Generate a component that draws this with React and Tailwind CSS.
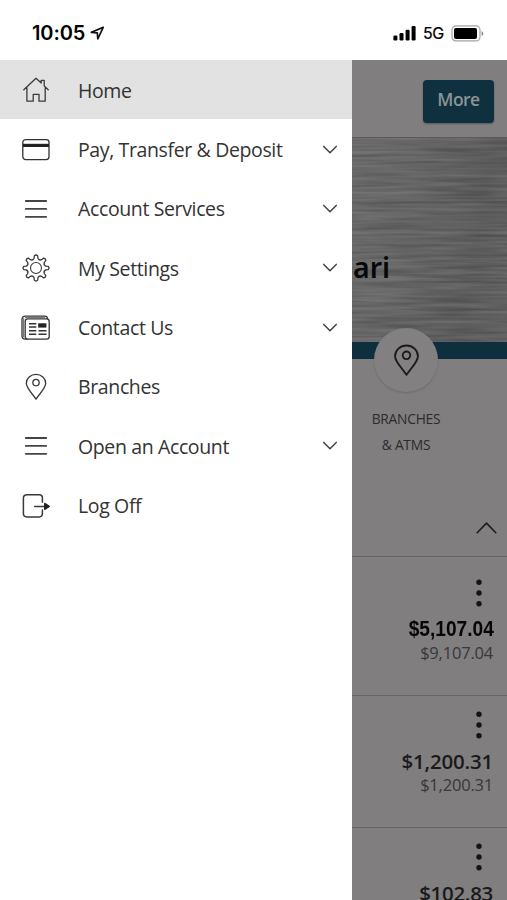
import React, { useState } from "react";

/* MENU ICONS */
const HomeIcon = () => (
  <svg width="28" height="28" viewBox="0 0 28 28" fill="none" stroke="#3a3a3a" strokeWidth="1.3" strokeLinejoin="round" strokeLinecap="round">
    <path d="M1.8 13.8 14 2.3l5.2 4.8V4.3h3v5.6l4 3.9M4.9 11.6v13.6h6.3v-6.9h5.8v6.9h6.2V11.6" />
  </svg>
);

const CardIcon = () => (
  <svg width="28" height="28" viewBox="0 0 28 28" fill="none" stroke="#333" strokeWidth="1.3">
    <rect x="0.8" y="3.6" width="26.2" height="20" rx="2.8" />
    <path d="M1 9.4h26" stroke="#222" strokeWidth="3.2" />
  </svg>
);

const LinesIcon = () => (
  <svg width="28" height="28" viewBox="0 0 28 28" fill="none" stroke="#444" strokeWidth="1.8" strokeLinecap="round">
    <path d="M3.8 6h20.4M3.8 13.9h20.4M3.8 21.8h20.4" />
  </svg>
);

const gearPath = () => {
  let d = "";
  for (let i = 0; i < 8; i++) {
    const pt = (r, deg) => {
      const a = ((i * 45 + deg - 90) * Math.PI) / 180;
      return `${(14 + r * Math.cos(a)).toFixed(2)} ${(14 + r * Math.sin(a)).toFixed(2)}`;
    };
    d += `${i === 0 ? "M" : "L"}${pt(10, -11)} L${pt(12.2, -8)} Q${pt(13.9, 0)} ${pt(12.2, 8)} L${pt(10, 11)} Q${pt(7.9, 22.5)} ${pt(10, 34)} `;
  }
  return d + "Z";
};

const GearIcon = () => (
  <svg width="28" height="28" viewBox="0 0 28 28" fill="none" stroke="#3a3a3a" strokeWidth="1.3" strokeLinejoin="round">
    <path d={gearPath()} />
    <circle cx="14" cy="14" r="5.5" strokeWidth="1.1" />
  </svg>
);

const NewsIcon = () => (
  <svg width="30" height="28" viewBox="0 0 30 28" fill="none" stroke="#333" strokeWidth="1.3" strokeLinejoin="round">
    <rect x="4.2" y="4.8" width="24" height="20.3" rx="2.6" />
    <path d="M6.5 25.1H4a3 3 0 0 1-3-3V5.2a3 3 0 0 1 3-3h19.6a3 3 0 0 1 3 2.7" />
    <path d="M2.6 4.2v19M4 3.5h20" stroke="#777" />
    <path d="M8 9.8h7.3M8 13.1h7.3M8 16.7h7.3M8 20.3h7.3M17.5 16.7h8M17.5 20.3h8" strokeWidth="1.5" />
    <path d="M17.2 9.3h8.2v4.3h-8.2z" fill="#222" stroke="none" />
  </svg>
);

const PinIcon = ({ size = 28, stroke = "#3a3a3a", width = 1.3 }) => (
  <svg width={size} height={size} viewBox="0 0 28 28" fill="none" stroke={stroke} strokeWidth={width} strokeLinejoin="round">
    <path d="M14 26.2C10.6 20.7 4.3 15.3 4.3 10.3a9.7 9 0 0 1 19.4 0c0 5-6.3 10.4-9.7 15.9Z" />
    <circle cx="14" cy="9.6" r="3.2" />
  </svg>
);

const LogOffIcon = () => (
  <svg width="28" height="28" viewBox="0 0 28 28" fill="none" stroke="#3a3a3a" strokeWidth="1.5" strokeLinecap="round">
    <path d="M20.4 10.2V6c0-2-1.4-3.3-3.3-3.3H4.8C2.7 2.7 1.4 4 1.4 6v15.6c0 2 1.4 3.3 3.4 3.3h12.3c2 0 3.3-1.3 3.3-3.3v-3.5" />
    <path d="M12.7 14.4h10" />
    <path d="M22.7 11.4v6l4.6-3z" fill="#222" stroke="#222" strokeWidth="1.3" strokeLinejoin="round" />
  </svg>
);

const menuItems = [
  { label: "Home", icon: <HomeIcon /> },
  { label: "Pay, Transfer & Deposit", icon: <CardIcon />, expandable: true },
  { label: "Account Services", icon: <LinesIcon />, expandable: true },
  { label: "My Settings", icon: <GearIcon />, expandable: true },
  { label: "Contact Us", icon: <NewsIcon />, expandable: true },
  { label: "Branches", icon: <PinIcon /> },
  { label: "Open an Account", icon: <LinesIcon />, expandable: true },
  { label: "Log Off", icon: <LogOffIcon /> },
];

const MoreDots = () => (
  <svg width="6" height="28" viewBox="0 0 6 28" fill="#141414" className="mr-[11.5px]">
    <circle cx="3" cy="3.2" r="2.7" />
    <circle cx="3" cy="14" r="2.7" />
    <circle cx="3" cy="24.8" r="2.7" />
  </svg>
);

/* brushed metal grain */
const Brushed = () => (
  <svg className="absolute inset-0 w-full h-full opacity-40" aria-hidden="true">
    <filter id="brushed" x="0" y="0" width="100%" height="100%" colorInterpolationFilters="sRGB">
      <feTurbulence type="fractalNoise" baseFrequency="0.014 0.3" numOctaves="2" seed="8" />
      <feColorMatrix values="0.42 0 0 0 0.18  0.42 0 0 0 0.178  0.42 0 0 0 0.178  0 0 0 0 1" />
    </filter>
    <rect width="100%" height="100%" filter="url(#brushed)" />
  </svg>
);

function StatusBar() {
  return (
    <div className="h-[60px] shrink-0 flex items-start justify-between pl-8 pr-[23px] pt-[22px] bg-white text-black">
      <div className="flex items-center h-[22px]">
        <span className="font-['Inter'] font-semibold text-[20px] leading-[22px] tracking-[-0.1px]">10:05</span>
        <svg width="15" height="15" viewBox="0 0 15 15" fill="none" stroke="#111" strokeWidth="1.7" strokeLinejoin="round" className="ml-[5px]">
          <path d="M13.2 1.3 1.3 6.4l6 .4.5 6.2z" />
        </svg>
      </div>
      <div className="flex items-center h-[22px]">
        <svg width="23" height="16" viewBox="0 0 23 16" fill="#000">
          <rect x="0.4" y="10.6" width="4" height="4.8" rx="1.2" />
          <rect x="6.5" y="8" width="4" height="7.4" rx="1.2" />
          <rect x="12.6" y="4.8" width="4" height="10.6" rx="1.2" />
          <rect x="18.6" y="1" width="4" height="14.4" rx="1.2" />
        </svg>
        <span className="ml-[7px] font-['Inter'] text-[16px] tracking-[-0.3px] leading-[22px] [-webkit-text-stroke:0.2px_#000]">5G</span>
        <svg width="33" height="17" viewBox="0 0 33 17" className="ml-[7px]">
          <rect x="1" y="0.9" width="28" height="15" rx="4" fill="none" stroke="#a3a3a3" strokeWidth="1.2" />
          <rect x="3" y="3" width="23" height="11" rx="2" fill="#000" />
          <path d="M30.6 6v5q1.7-1 1.7-2.5T30.6 6Z" fill="#888" />
        </svg>
      </div>
    </div>
  );
}

function Account({ balance, available, className, balanceClass }) {
  return (
    <div className={`flex flex-col items-end border-t border-[#656263] pr-[14px] shrink-0 ${className}`}>
      <MoreDots />
      <p className={balanceClass}>{balance}</p>
      {available && (
        <p className="text-[16.5px] tracking-[-0.2px] leading-[22px] text-[#39373a]">{available}</p>
      )}
    </div>
  );
}

export default function App() {
  const [active, setActive] = useState("Home");

  return (
    <div className="w-[507px] h-[900px] overflow-hidden flex flex-col bg-white font-['Open_Sans',sans-serif]">
      <StatusBar />

      <div className="flex flex-1 min-h-0">
        {/* DRAWER */}
        <nav className="w-[352px] shrink-0 bg-white">
          {menuItems.map((item) => (
            <button
              key={item.label}
              onClick={() => setActive(item.label)}
              className={`w-full h-[59.35px] flex items-center pt-[1px] pr-[14px] text-left text-[#333] ${
                active === item.label ? "bg-[#e2e2e2]" : ""
              }`}
            >
              <span className="w-[72px] shrink-0 flex justify-center">{item.icon}</span>
              <span className="ml-[6px] flex-1 text-[19.5px] tracking-[-0.37px] whitespace-nowrap">
                {item.label}
              </span>
              {item.expandable && (
                <svg width="16" height="10" viewBox="0 0 16 10" fill="none" stroke="#444" strokeWidth="1.5" strokeLinecap="round" strokeLinejoin="round">
                  <path d="M1.8 1.4 8 7.8l6.2-6.4" />
                </svg>
              )}
            </button>
          ))}
        </nav>

        {/* DIMMED PAGE */}
        <main className="flex-1 min-w-0 overflow-hidden flex flex-col bg-[#807e7f]">
          <div className="h-[77px] shrink-0 flex justify-end pt-5 pr-[13px]">
            <button className="w-[71px] h-[43px] pb-[4px] rounded-[4px] bg-[#0f303e] text-[#8a9499] text-[17.5px] tracking-[-0.5px] font-semibold shadow-[0_1px_2px_rgba(0,0,0,0.3)]">
              More
            </button>
          </div>

          <div className="relative h-[205px] shrink-0 border-t border-[#5c5b5b] bg-[linear-gradient(100deg,#717070_0%,#676666_40%,#585758_75%,#636263_100%)] flex items-start pt-[109px] pl-[1px]">
            <Brushed />
            <span className="relative font-['Noto_Sans'] font-semibold text-[28.5px] leading-[40px] text-[#080808]">ari</span>
          </div>
          <div className="h-[17px] shrink-0 bg-[#0e2f3d]" />

          <div className="w-[108px] -mt-[31px] h-[228px] shrink-0 flex flex-col items-center text-[#2d2b2c]">
            <div className="relative w-16 h-16 shrink-0 rounded-full bg-[#828081] shadow-[0_1px_2px_rgba(0,0,0,0.16)] flex items-center justify-center">
              <PinIcon size={33} stroke="#1c1b1c" width={1.6} />
            </div>
            <p className="mt-[14px] text-center text-[13.8px] tracking-[-0.25px] leading-[25.5px]">
              BRANCHES
              <br />& ATMS
            </p>
          </div>

          {/* section toggle sits over the tail of the quick action block */}
          <div className="h-0 flex justify-end items-end pr-[10px] pb-[22px] -mt-[22px] shrink-0">
            <svg width="21" height="13" viewBox="0 0 21 13" fill="none" stroke="#1d1c1d" strokeWidth="1.6" strokeLinecap="round" strokeLinejoin="round">
              <path d="M1.2 11.7 10.5 2.1l9.3 9.6" />
            </svg>
          </div>

          <Account
            balance="$5,107.04"
            available="$9,107.04"
            className="h-[139px] pt-[22px]"
            balanceClass="mt-[9px] -mr-[1px] origin-right scale-x-[0.87] font-['Liberation_Sans'] font-bold text-[22px] leading-[26px] text-[#060606]"
          />
          <Account
            balance="$1,200.31"
            available="$1,200.31"
            className="h-[132px] pt-[15px]"
            balanceClass="mt-[9px] font-semibold text-[20.5px] tracking-[-0.2px] leading-[26px] text-[#1b1a1b]"
          />
          <Account
            balance="$102.83"
            className="h-[132px] pt-[15px]"
            balanceClass="mt-[9px] font-semibold text-[20.5px] tracking-[-0.3px] leading-[26px] text-[#1b1a1b]"
          />
        </main>
      </div>
    </div>
  );
}
